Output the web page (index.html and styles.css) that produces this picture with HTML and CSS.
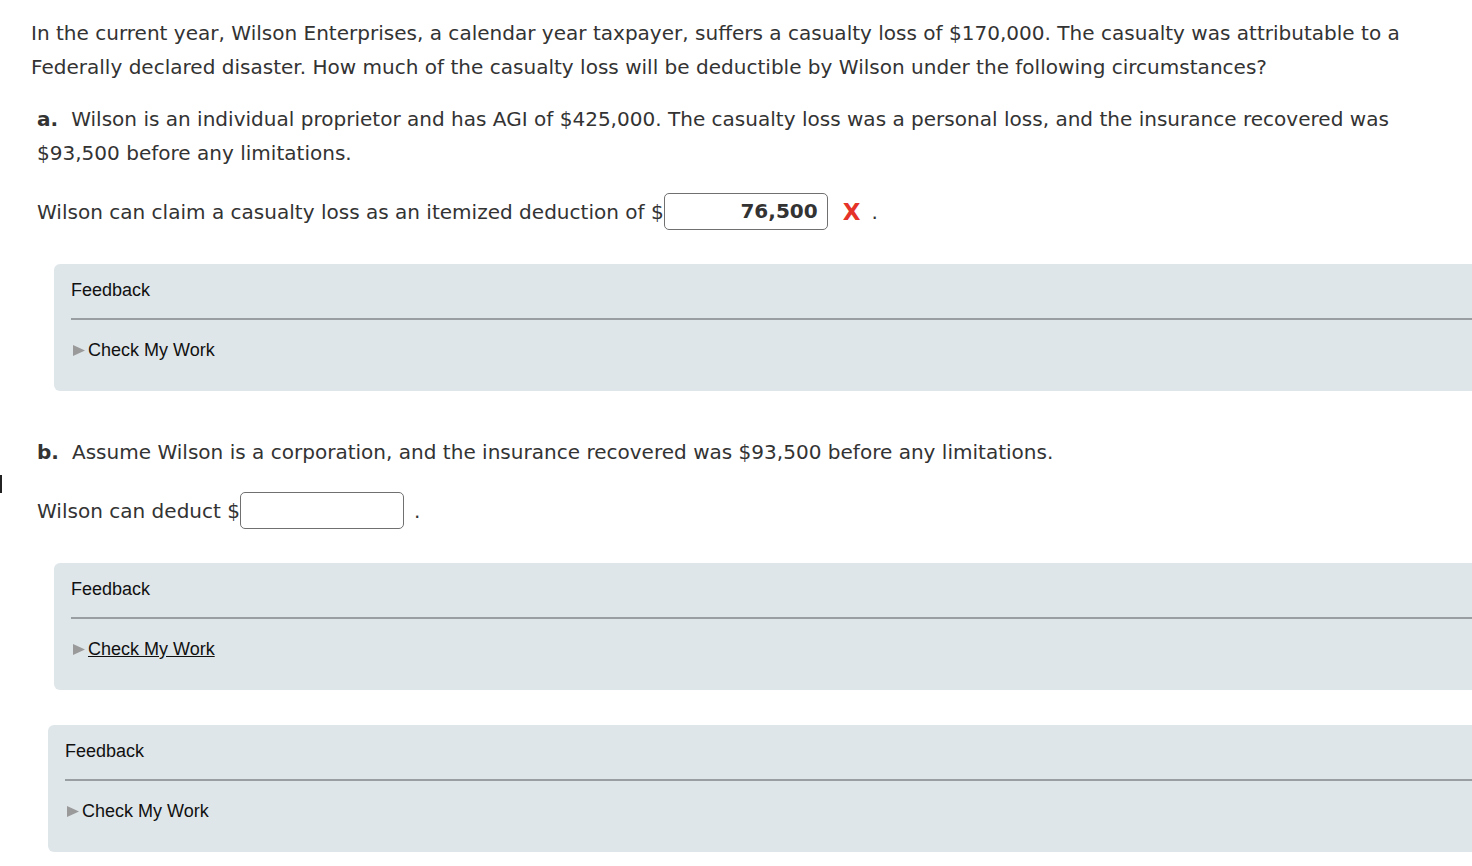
FILE: index.html
```html
<!DOCTYPE html>
<html>
<head>
<meta charset="utf-8">
<link rel="stylesheet" href="styles.css">
</head>
<body>
<div class="edge-mark"></div>
<main class="page">
  <p class="intro">In the current year, Wilson Enterprises, a calendar year taxpayer, suffers a casualty loss of $170,000. The casualty was attributable to a Federally declared disaster. How much of the casualty loss will be deductible by Wilson under the following circumstances?</p>

  <section class="part">
    <p class="part-q"><b class="label">a.</b>Wilson is an individual proprietor and has AGI of $425,000. The casualty loss was a personal loss, and the insurance recovered was $93,500 before any limitations.</p>
    <div class="answer-row">
      <span>Wilson can claim a casualty loss as an itemized deduction of $</span><span class="input filled">76,500</span><span class="mark">X</span><span class="dot">.</span>
    </div>
    <div class="feedback">
      <div class="fb-title">Feedback</div>
      <div class="fb-body"><span class="tri"><svg width="12" height="11" viewBox="0 0 12 11"><polygon points="0,0 12,5.5 0,11" fill="#9a9a9a"/></svg></span><span class="cmw">Check My Work</span></div>
    </div>
  </section>

  <section class="part part-b">
    <p class="part-q"><b class="label">b.</b>Assume Wilson is a corporation, and the insurance recovered was $93,500 before any limitations.</p>
    <div class="answer-row">
      <span>Wilson can deduct $</span><span class="input"></span><span class="dot dot-b">.</span>
    </div>
    <div class="feedback">
      <div class="fb-title">Feedback</div>
      <div class="fb-body"><span class="tri"><svg width="12" height="11" viewBox="0 0 12 11"><polygon points="0,0 12,5.5 0,11" fill="#9a9a9a"/></svg></span><span class="cmw link">Check My Work</span></div>
    </div>
  </section>

  <div class="feedback feedback-outer">
    <div class="fb-title">Feedback</div>
    <div class="fb-body"><span class="tri"><svg width="12" height="11" viewBox="0 0 12 11"><polygon points="0,0 12,5.5 0,11" fill="#9a9a9a"/></svg></span><span class="cmw">Check My Work</span></div>
  </div>
</main>
</body>
</html>
```

FILE: styles.css
```css
html, body {
  margin: 0;
  padding: 0;
  overflow: hidden;
  background: #ffffff;
}
body {
  font-family: "DejaVu Sans", Verdana, sans-serif;
  font-size: 20.05px;
  color: #333333;
  width: 1472px;
  height: 866px;
  position: relative;
}
.edge-mark {
  position: absolute;
  left: 0;
  top: 475px;
  width: 2px;
  height: 18px;
  background: #222;
}
.page {
  padding: 16px 0 0 31px;
  width: 1600px;
}
.intro {
  margin: 0;
  width: 1395px;
  line-height: 34px;
}
.part {
  padding-left: 6px;
}
.part-q {
  margin: 18px 0 0 0;
  width: 1385px;
  line-height: 34px;
}
.label {
  font-weight: bold;
  margin-right: 13px;
}
.answer-row {
  display: flex;
  align-items: center;
  margin-top: 23px;
  height: 37px;
}
.input {
  display: inline-block;
  box-sizing: border-box;
  width: 164px;
  height: 37px;
  border: 1.5px solid #707070;
  border-radius: 5px;
  background: #fff;
  text-align: right;
  padding-right: 9px;
  font-weight: bold;
  line-height: 34px;
}
.mark {
  color: #e53329;
  font-weight: bold;
  font-size: 23px;
  margin-left: 15px;
}
.dot {
  margin-left: 11px;
}
.dot-b {
  margin-left: 10px;
}
.feedback {
  margin-top: 34px;
  margin-left: 17px;
  background: #dfe6ea;
  border-radius: 6px;
  height: 127px;
  box-sizing: border-box;
  padding: 13px 0 0 17px;
  font-family: "Liberation Sans", Arial, sans-serif;
  font-size: 18px;
  color: #111;
}
.fb-title {
  line-height: 26px;
  padding-bottom: 15px;
  border-bottom: 2px solid #999ea2;
}
.fb-body {
  display: flex;
  align-items: center;
  margin-top: 17px;
  line-height: 26px;
}
.tri {
  display: inline-flex;
  margin-left: 2px;
  margin-right: 3px;
}
.link {
  text-decoration: underline;
}
.part-b {
  margin-top: 44px;
}
.part-b .part-q {
  margin-top: 0;
}
.feedback-outer {
  margin-left: 17px;
  margin-top: 35px;
}
```
